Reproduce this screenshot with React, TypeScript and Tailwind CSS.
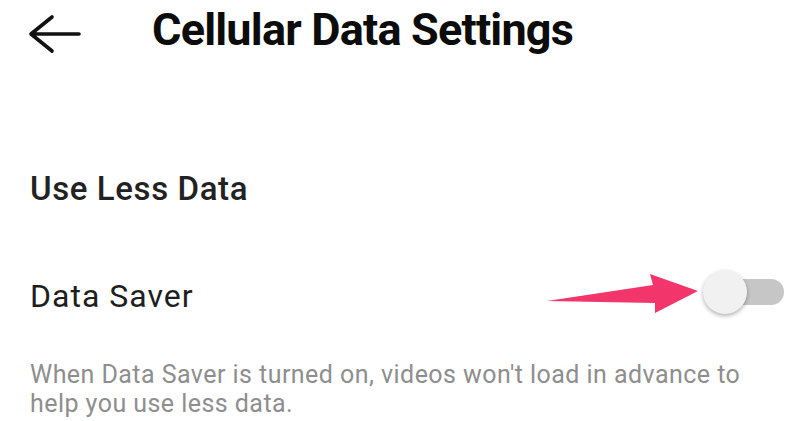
import React from "react";

export default function App() {
  return (
    <div
      className="relative w-[800px] h-[421px] bg-white overflow-hidden text-[#111]"
      style={{ fontFamily: "Roboto, 'Noto Sans', sans-serif" }}
    >
      {/* Header */}
      <div className="flex items-center h-[68px] pl-[28px]">
        <svg width="54" height="40" viewBox="0 0 54 40" className="shrink-0">
          <path
            d="M24 3 L3 20 L24 37 M3 20 L51 20"
            fill="none"
            stroke="#111"
            strokeWidth="3.6"
            strokeLinecap="round"
            strokeLinejoin="round"
          />
        </svg>
        <h1 className="ml-[70px] text-[45px] leading-[60px] font-bold tracking-[-0.8px] text-[#0c0c0c] -mt-[8px]">
          Cellular Data Settings
        </h1>
      </div>

      <div className="pl-[30px] pr-[16px]">
        <h2 className="mt-[101px] text-[33px] leading-[40px] font-medium tracking-[0.6px] text-[#222]">
          Use Less Data
        </h2>

        <div className="mt-[67px] flex items-center justify-between h-[40px]">
          <span className="text-[32px] leading-[40px] tracking-[1px] text-[#1e1e1e]">Data Saver</span>
          <div className="relative w-[81px] h-[44px] mb-[8px]">
            <div className="absolute left-[7px] right-0 top-[9px] h-[26px] rounded-full bg-[#c6c6c6]" />
            <div className="absolute left-0 top-0 w-[44px] h-[44px] rounded-full bg-[#f1f1f1] shadow-[0_2px_4px_rgba(0,0,0,0.3)]" />
          </div>
        </div>

        <p className="mt-[44px] text-[25px] leading-[29px] tracking-[0.45px] text-[#8e8e8e] max-w-[730px]">
          When Data Saver is turned on, videos won't load in advance to help you use less data.
        </p>
      </div>

      {/* Annotation arrow */}
      <svg
        className="absolute left-0 top-0 pointer-events-none"
        width="800"
        height="421"
        viewBox="0 0 800 421"
      >
        <polygon
          points="547,301 653,285 650,274 698,291 655,313 655,303"
          fill="#f2356b"
        />
      </svg>
    </div>
  );
}
